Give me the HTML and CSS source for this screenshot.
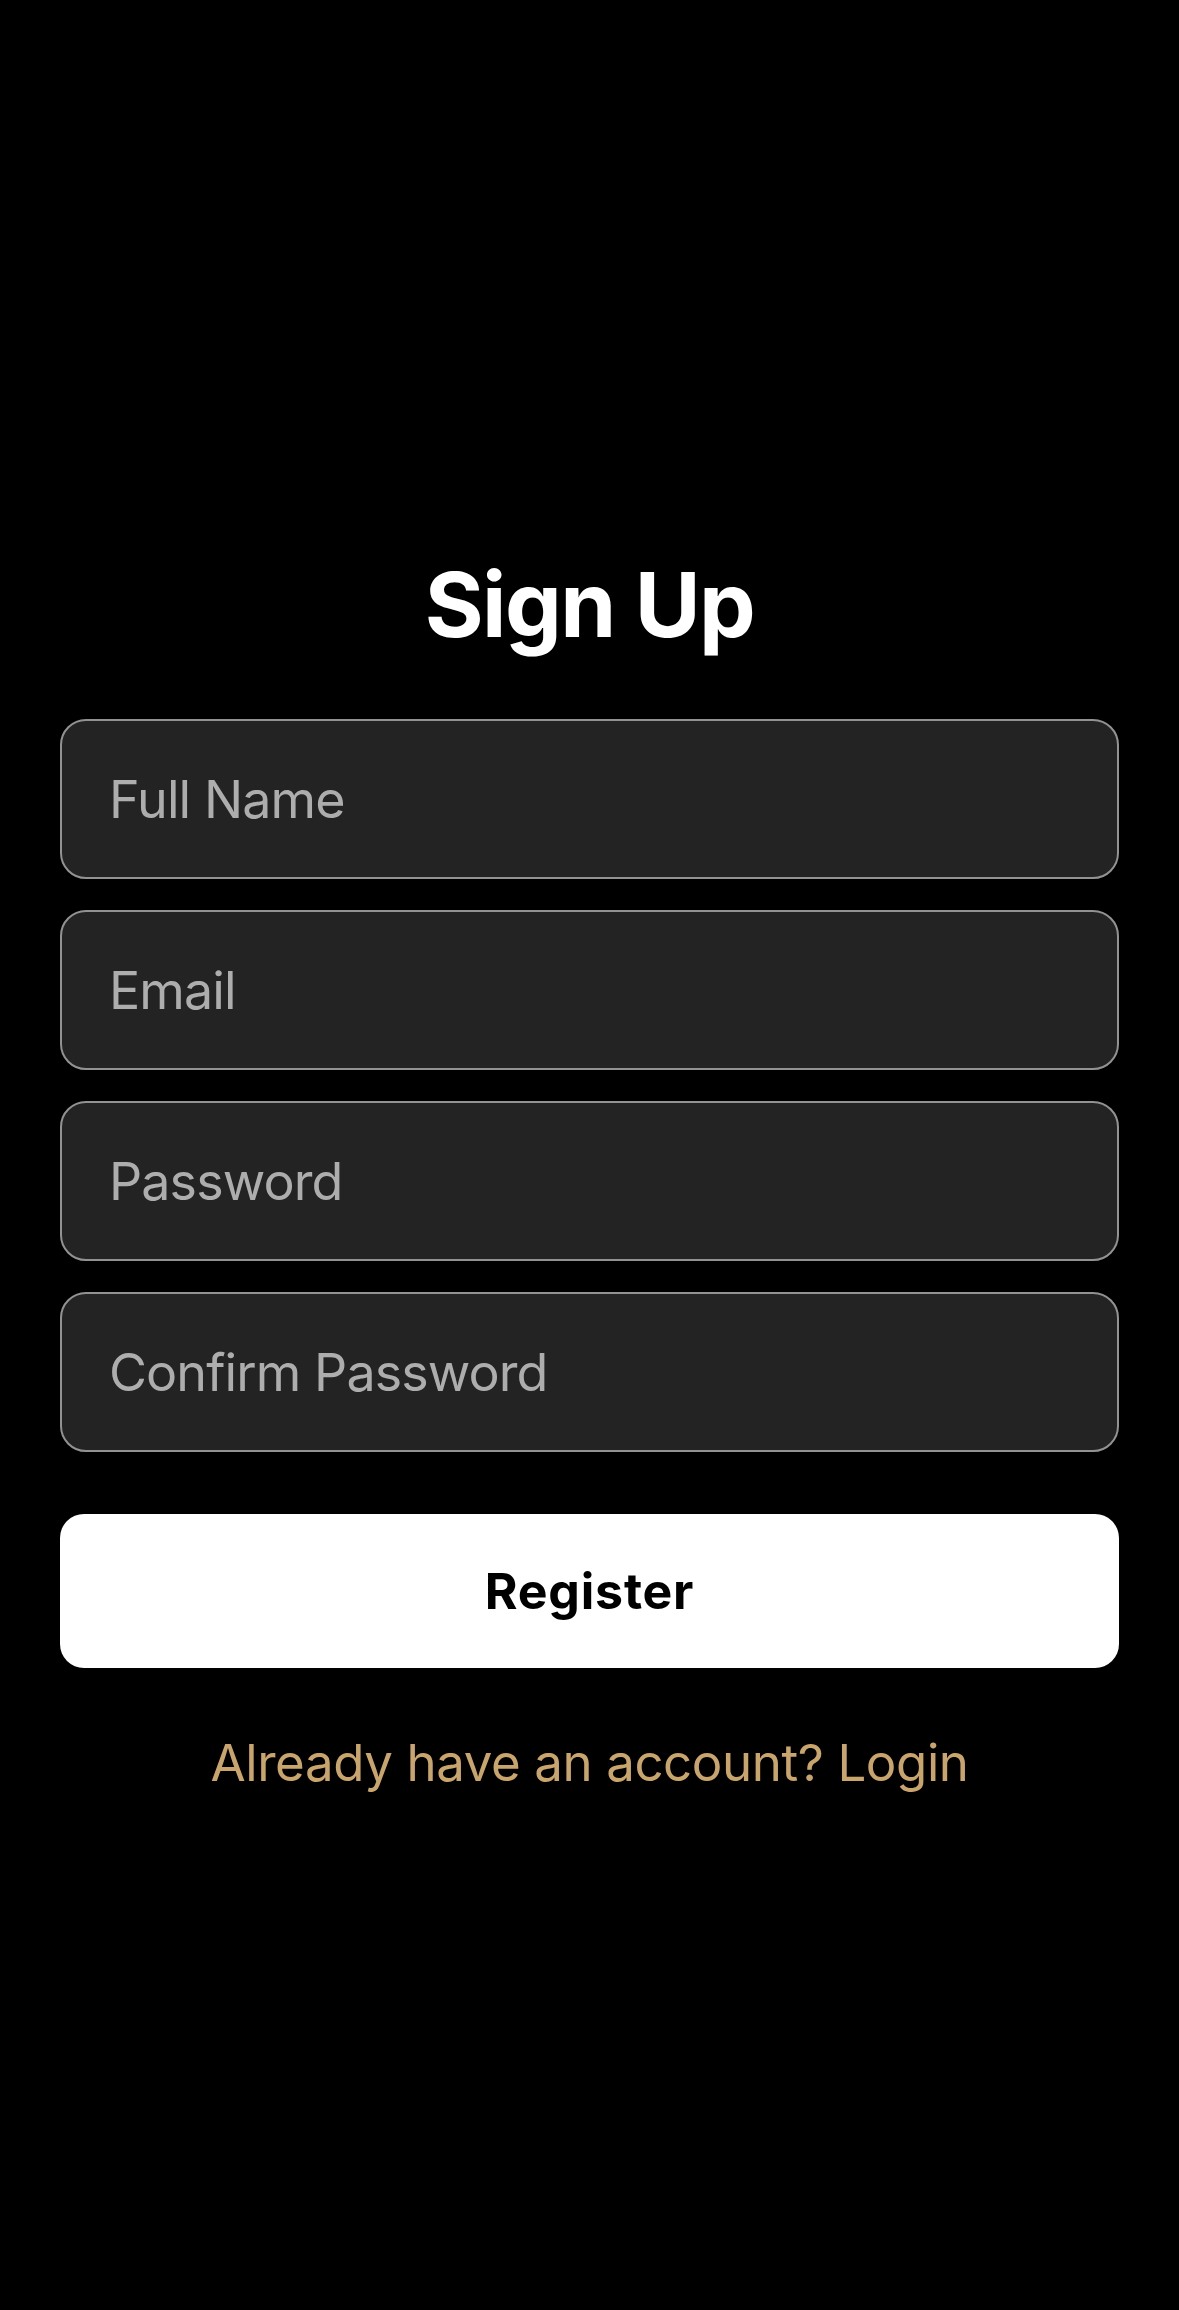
FILE: index.html
```html
<!DOCTYPE html>
<html lang="en">
<head>
<meta charset="utf-8">
<title>Sign Up</title>
<link rel="stylesheet" href="styles.css">
</head>
<body>
<main class="screen">
  <h1 class="title">Sign Up</h1>
  <form class="form">
    <input class="field" type="text" placeholder="Full Name">
    <input class="field" type="email" placeholder="Email">
    <input class="field" type="password" placeholder="Password">
    <input class="field" type="password" placeholder="Confirm Password">
  </form>
  <button class="register" type="button">Register</button>
  <p class="switch">Already have an account? Login</p>
</main>
</body>
</html>
```

FILE: styles.css
```css
html, body {
  margin: 0;
  padding: 0;
  background: #000;
}

body {
  font-family: Inter, "Noto Sans", Roboto, sans-serif;
  min-height: 2310px;
}

.screen {
  display: flex;
  flex-direction: column;
  padding: 547px 60px 0;
}

.title {
  margin: 0;
  color: #fff;
  font-size: 90px;
  line-height: 116px;
  font-weight: 700;
  text-align: center;
  letter-spacing: -1.5px;
}

.form {
  margin: 56px 0 0;
  display: flex;
  flex-direction: column;
  gap: 31px;
}

.field {
  box-sizing: border-box;
  width: 100%;
  height: 160px;
  margin: 0;
  padding: 0 47px;
  border: 2px solid #929292;
  border-radius: 26px;
  background: #232323;
  color: #e0e0e0;
  font-family: Inter, "Noto Sans", sans-serif;
  font-size: 52px;
  letter-spacing: -0.9px;
  outline: none;
}

.field::placeholder {
  color: #adadad;
  opacity: 1;
}

.register {
  margin-top: 62px;
  height: 154px;
  border: none;
  border-radius: 24px;
  background: #fff;
  color: #000;
  font-family: Inter, "Noto Sans", sans-serif;
  font-size: 50px;
  font-weight: 700;
  letter-spacing: 0.8px;
  padding: 0;
}

.switch {
  margin: 62px 0 0;
  text-align: center;
  color: #c9a56b;
  font-size: 51px;
  line-height: 65px;
  letter-spacing: -0.4px;
}
```
